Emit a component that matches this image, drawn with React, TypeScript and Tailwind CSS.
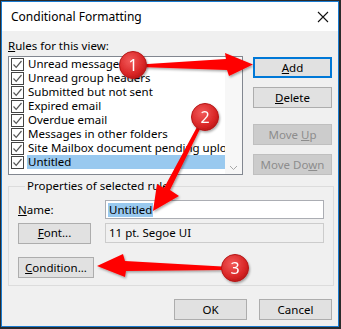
import React from 'react';

const rules = [
  'Unread messages',
  'Unread group headers',
  'Submitted but not sent',
  'Expired email',
  'Overdue email',
  'Messages in other folders',
  'Site Mailbox document pending upload',
  'Untitled',
];

const Check = () => (
  <div className="w-[13px] h-[13px] border border-[#444] bg-white shrink-0 flex items-center justify-center">
    <svg width="11" height="11" viewBox="0 0 11 11">
      <path d="M1.5 5.5 L4.2 8.3 L9.5 2" fill="none" stroke="#555" strokeWidth="1.2" />
    </svg>
  </div>
);

const Btn = ({
  children,
  className = '',
  disabled = false,
  focused = false,
}: {
  children: React.ReactNode;
  className?: string;
  disabled?: boolean;
  focused?: boolean;
}) => (
  <div
    className={
      'h-[21px] flex items-center justify-center ' +
      (disabled
        ? 'bg-[#cccccc] border border-[#bfbfbf] text-[#8d8d8d] '
        : focused
        ? 'bg-[#e1e1e1] border-2 border-[#0078d7] text-black '
        : 'bg-[#e1e1e1] border border-[#adadad] text-black ') +
      className
    }
  >
    <span className="whitespace-pre">{children}</span>
  </div>
);

const Badge = ({ cx, cy, n }: { cx: number; cy: number; n: string }) => (
  <g filter="url(#sh)">
    <circle cx={cx} cy={cy} r="13.5" fill="url(#rg)" stroke="#b51818" strokeWidth="1" />
    <text
      x={cx}
      y={cy + 5.5}
      textAnchor="middle"
      fontSize="16"
      fontFamily="'Noto Sans', sans-serif"
      fill="#fff"
    >
      {n}
    </text>
  </g>
);

const Annotations = () => (
  <svg className="absolute inset-0 pointer-events-none" width="341" height="329" viewBox="0 0 341 329">
    <defs>
      <radialGradient id="rg" cx="40%" cy="35%" r="70%">
        <stop offset="0%" stopColor="#f25a5a" />
        <stop offset="70%" stopColor="#d92626" />
        <stop offset="100%" stopColor="#b81616" />
      </radialGradient>
      <filter id="sh" x="-30%" y="-30%" width="160%" height="160%">
        <feDropShadow dx="1" dy="1.5" stdDeviation="1.2" floodColor="#000" floodOpacity="0.35" />
      </filter>
    </defs>
    <g filter="url(#sh)" fill="#ff0000">
      <polygon points="140,64.5 226,59 225,53 253,64.5 229,76 227,70 140,67" />
      <polygon points="197,127 200,129 170,190 179,196 153,211 157,184 164,188" />
      <polygon points="222,266.5 125,261 123,254 97,266 125,277 126,271 222,270" />
    </g>
    <Badge cx={133} cy={65} n="1" />
    <Badge cx={205} cy={117} n="2" />
    <Badge cx={235} cy={268} n="3" />
  </svg>
);

export default function App() {
  return (
    <div
      className="relative w-[341px] h-[329px] bg-[#2b2b2b] pl-px pt-px pr-[2px] pb-[2px] text-[11.5px] text-black"
      style={{ fontFamily: "'Noto Sans', sans-serif" }}
    >
      <div className="w-full h-full border border-[#1a7bd0] flex flex-col bg-[#f0f0f0]">
        <div className="h-[29px] bg-white flex items-center justify-between pl-[9px] pr-[9px] shrink-0">
          <span className="text-[12px]">Conditional Formatting</span>
          <svg width="12" height="12" viewBox="0 0 12 12">
            <path d="M1 1 L11 11 M11 1 L1 11" stroke="#111" strokeWidth="1.1" />
          </svg>
        </div>
        <div className="flex-1 flex flex-col pl-[6px] pr-[5px]">
          <div className="mt-[7px] h-[16px] leading-[16px]">
            <span className="underline">R</span>ules for this view:
          </div>
          <div className="mt-[2px] flex">
            <div className="w-[235px] h-[119px] border border-[#828790] bg-white flex overflow-hidden">
              <div className="flex-1 min-w-0 flex flex-col">
                {rules.map((r, i) => (
                  <div key={r} className="h-[14px] flex items-center pl-[2px] shrink-0">
                    <Check />
                    <div
                      className={
                        'ml-[3px] flex-1 h-[14px] leading-[14px] pl-px whitespace-nowrap overflow-hidden ' +
                        (i === rules.length - 1 ? 'bg-[#99c9ef]' : '')
                      }
                    >
                      {r}
                    </div>
                  </div>
                ))}
              </div>
              <div className="w-[17px] bg-[#f7f7f7] flex flex-col justify-end items-center pb-[3px]">
                <svg width="9" height="6" viewBox="0 0 9 6">
                  <path d="M1 1 L4.5 4.5 L8 1" fill="none" stroke="#a8a8a8" strokeWidth="1" />
                </svg>
              </div>
            </div>
            <div className="ml-[10px] w-[79px] flex flex-col pt-px">
              <Btn focused>
                <span className="underline">A</span>dd
              </Btn>
              <Btn className="mt-[9px]">
                <span className="underline">D</span>elete
              </Btn>
              <Btn disabled className="mt-[16px]">
                Move <span className="underline">U</span>p
              </Btn>
              <Btn disabled className="mt-[9px]">
                Move Do<span className="underline">w</span>n
              </Btn>
            </div>
          </div>
          <fieldset className="mt-[3px] w-[326px] border border-[#dcdcdc] pl-[9px] pr-[9px] pb-[7px]">
            <legend className="ml-[7px] px-[2px] h-[16px] leading-[16px]">Properties of selected rule</legend>
            <div className="mt-[6px] flex items-center h-[19px]">
              <div className="w-[87px]">
                <span className="underline">N</span>ame:
              </div>
              <div className="flex-1 h-[19px] border border-[#abadb3] bg-white flex items-center pl-[2px]">
                <span className="bg-[#99c9ef] px-px leading-[14px]">Untitled</span>
              </div>
            </div>
            <div className="mt-[4px] flex items-center h-[20px]">
              <Btn className="w-[73px] h-[20px]">
                <span className="underline">F</span>ont...
              </Btn>
              <div className="ml-[14px] flex-1 h-[20px] border border-[#cccccc] bg-[#f0f0f0] flex items-center pl-[3px]">
                11 pt. Segoe UI
              </div>
            </div>
            <div className="mt-[14px] flex">
              <Btn className="w-[76px] h-[20px]">
                <span className="underline">C</span>ondition...
              </Btn>
            </div>
          </fieldset>
          <div className="mt-[13px] flex justify-end gap-[12px] pr-px">
            <Btn className="w-[73px]">OK</Btn>
            <Btn className="w-[73px]">Cancel</Btn>
          </div>
        </div>
      </div>
      <Annotations />
    </div>
  );
}
